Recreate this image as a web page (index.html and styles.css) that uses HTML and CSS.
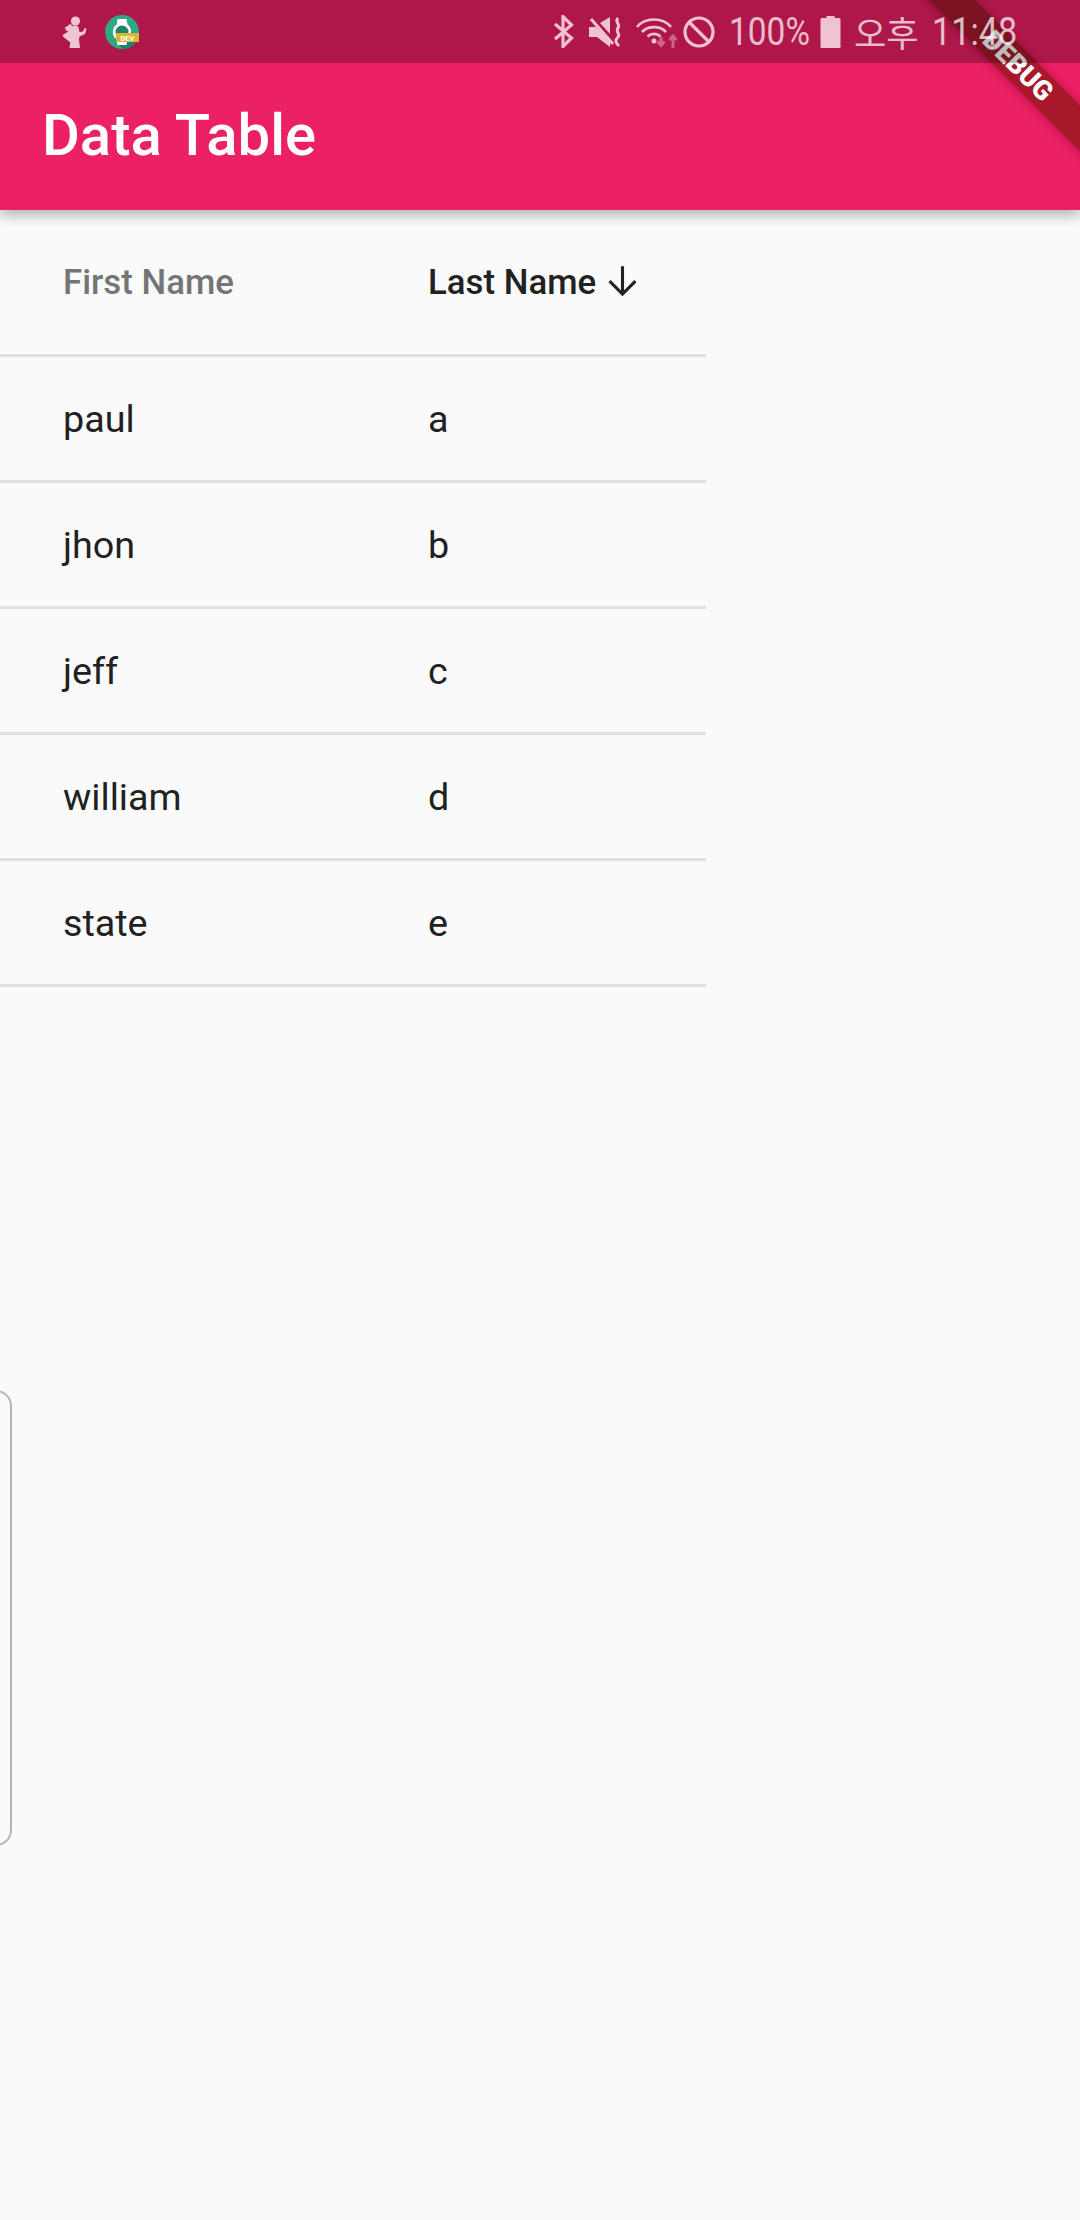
FILE: index.html
```html
<!DOCTYPE html>
<html lang="ko">
<head>
<meta charset="utf-8">
<title>Data Table</title>
<link rel="stylesheet" href="styles.css">
</head>
<body>
<div class="screen">
  <header class="appbar"><h1 class="title">Data Table</h1></header>

  <div class="banner"><span class="banner-text">DEBUG</span></div>

  <div class="statusbar">
    <div class="status-left">
      <svg class="ic-person" viewBox="0 0 26 32"><g fill="#efc3d2"><circle cx="13.500" cy="5" r="4.600"/><path d="M9 10.500c3-1.600 6.500-1.300 7.500 1 .8 1.800.6 3.300 1 4.500l3.500-.5 1.500-3.500 2 .8-1.500 5.200-5.500 2.500-.5 3 1 8.500H7.500l.8-5.500L1 20.500l-.5-1.500 6-3.500-3-1 1-1.500z"/><path d="M9 7.500 2.500 12l1.500 1.500 6-3z"/></g></svg>
      <svg class="ic-dev" viewBox="0 0 34 34">
        <circle cx="17" cy="17" r="17" fill="#2ea885"/>
        <path d="M11 6 34 22a17 17 0 0 1-16 12L10 26z" fill="#1f8468"/>
        <path d="M12.500 4h9l1 5.500a9.500 9.500 0 0 1 0 15l-1 5.500h-9l-1-5.500a9.500 9.500 0 0 1 0-15z" fill="#fff"/>
        <circle cx="17" cy="17" r="6.500" fill="#1f8468"/>
        <rect x="11" y="18" width="23" height="9" fill="#dcb536"/>
        <text class="dev-text" x="22.500" y="25.500">DEV</text>
      </svg>
    </div>
    <div class="status-right">
      <svg class="ic-bt" viewBox="0 0 20 33"><path d="M1.500 9 18 23l-8.500 8.500V1.500L18 10 1.500 24" fill="none" stroke="#efc3d2" stroke-width="3.200"/></svg>
      <svg class="ic-mute" viewBox="0 0 34 32">
        <path d="M1 11h6l1 0 14 14v6L9 21H1zM12 7l10-6v17z" fill="#efc3d2"/>
        <path d="M3 3 25 28" stroke="#efc3d2" stroke-width="3"/>
        <path d="M30 2c-4 4 3 6 0 10s3 6 0 9-3 5 1 9" fill="none" stroke="#efc3d2" stroke-width="3"/>
      </svg>
      <svg class="ic-wifi" viewBox="0 0 42 32">
        <g fill="none" stroke="#efc3d2" stroke-width="2.600"><path d="M1 11C9 1 27 1 35 11"/><path d="M6 16c6-6.500 18-6.500 24 0"/><path d="M11.500 20.500c3.500-3.500 9.500-3.500 13 0"/></g>
        <circle cx="18" cy="25" r="2.500" fill="#efc3d2"/>
        <path d="M25 21v7M21.500 25.500l3.500 4 3.500-4" fill="none" stroke="#d0648b" stroke-width="3"/>
        <path d="M37 32v-11M33.500 24l3.500-4 3.500 4" fill="none" stroke="#d0648b" stroke-width="3"/>
      </svg>
      <svg class="ic-block" viewBox="0 0 32 32"><circle cx="16" cy="16" r="14" fill="none" stroke="#efc3d2" stroke-width="3.200"/><path d="M6 6 26 26" stroke="#efc3d2" stroke-width="3.200"/></svg>
      <span class="status-text pct">100%</span>
      <svg class="ic-batt" viewBox="0 0 20 32"><path d="M6 0h8v2h4.500q1.500 0 1.500 1.500V31q0 1-1.500 1h-17Q0 32 0 31V3.500Q0 2 1.500 2H6z" fill="#efc3d2"/></svg>
      <span class="status-text ampm">오후</span>
      <span class="status-text clock">11:48</span>
    </div>
  </div>

  <main class="table">
    <div class="row head">
      <div class="cell dim">First Name</div>
      <div class="cell strong">Last Name
        <svg class="sort" viewBox="0 0 24 24"><path d="M12 1v21.500M2 12.500l10 10 10-10" fill="none" stroke="#212121" stroke-width="2.400"/></svg>
      </div>
    </div>
    <div class="row"><div class="cell">paul</div><div class="cell">a</div></div>
    <div class="row"><div class="cell">jhon</div><div class="cell">b</div></div>
    <div class="row"><div class="cell">jeff</div><div class="cell">c</div></div>
    <div class="row"><div class="cell">william</div><div class="cell">d</div></div>
    <div class="row"><div class="cell">state</div><div class="cell">e</div></div>
  </main>

  <div class="edge-handle"></div>
</div>
</body>
</html>
```
FILE: styles.css
```css
* { box-sizing: border-box; }
html, body { margin: 0; padding: 0; }
body { background: #fafafa; font-family: Roboto, "Noto Sans CJK KR", sans-serif; }

.screen { position: relative; width: 1080px; height: 2220px; overflow: hidden; background: #fafafa; }

.appbar {
  height: 210px;
  padding: 59px 0 0 42px;
  display: flex;
  align-items: center;
  background: #ec2064;
  box-shadow: 0 5px 12px rgba(0, 0, 0, .3);
}
.title { margin: 0; font-size: 58px; font-weight: 500; color: #fff; line-height: 1; }

.banner {
  position: absolute;
  left: 868px;
  top: 50px;
  width: 300px;
  height: 32px;
  display: flex;
  align-items: center;
  justify-content: center;
  transform: rotate(45deg);
  background: rgba(160, 24, 36, .9);
  box-shadow: 0 1px 10px rgba(120, 0, 40, .55);
}
.banner-text { font-size: 27px; font-weight: 900; color: #fff; line-height: 1; }

.statusbar {
  position: absolute;
  left: 0;
  top: 0;
  width: 1080px;
  height: 63px;
  padding: 0 64px 0 62px;
  display: flex;
  justify-content: space-between;
  align-items: center;
  background: rgba(0, 0, 0, .26);
}
.status-left, .status-right { display: flex; align-items: center; }
.status-left svg, .status-right svg { display: block; flex: none; }
.ic-person { width: 26px; height: 32px; }
.ic-dev { width: 34px; height: 34px; margin-left: 17px; }
.dev-text { font: 700 7.500px Roboto, sans-serif; fill: #fff; text-anchor: middle; }
.ic-bt { width: 21px; height: 33px; }
.ic-mute { width: 34px; height: 32px; margin-left: 14px; }
.ic-wifi { width: 42px; height: 32px; margin-left: 14px; }
.ic-block { width: 32px; height: 32px; margin-left: 5px; }
.ic-batt { width: 21px; height: 32px; margin-left: 12px; }
.status-text { display: block; flex: none; font-size: 38px; line-height: 1; color: rgba(255, 255, 255, .72); white-space: nowrap; transform-origin: left center; }
.pct { width: 79px; margin-left: 14px; transform: scaleX(.88); }
.ampm { width: 66px; margin-left: 13px; font-size: 35px; font-family: "Noto Sans CJK KR", sans-serif; }
.clock { width: 84px; margin-left: 12px; transform: scaleX(.9); }

.table { width: 706px; }
.row {
  display: grid;
  grid-template-columns: 365px 1fr;
  align-items: center;
  height: 126px;
  padding-left: 63px;
  border-bottom: 3px solid #e0e0e0;
  font-size: 37.700px;
  color: #212121;
}
.head { height: 147px; font-size: 34.800px; font-weight: 500; }
.cell { display: flex; align-items: center; white-space: nowrap; }
.dim { color: #757575; }
.strong { color: #212121; }
.sort { width: 31px; height: 31px; margin-left: 11px; margin-top: -3px; }

.edge-handle {
  position: absolute;
  left: -30px;
  top: 1390px;
  width: 42px;
  height: 456px;
  border: 2px solid #b4b4b4;
  border-radius: 16px;
}
```
